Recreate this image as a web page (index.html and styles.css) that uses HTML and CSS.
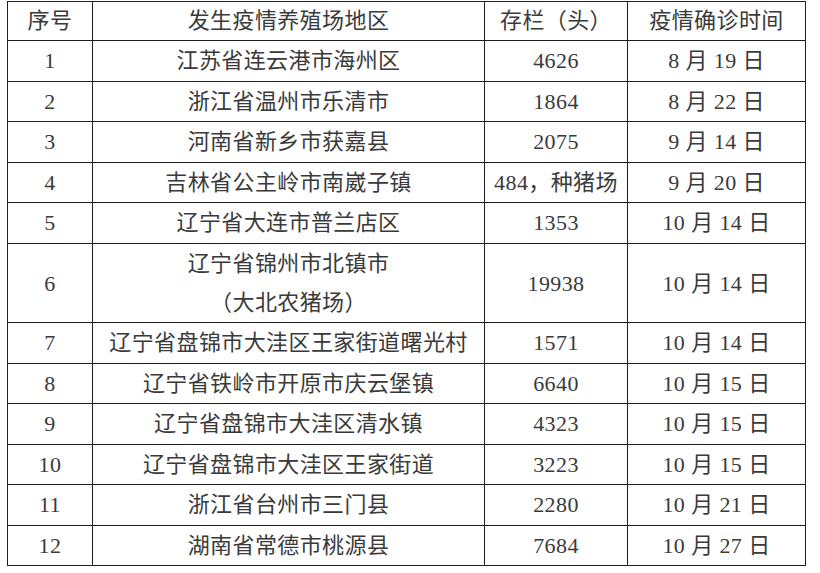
FILE: index.html
```html
<!DOCTYPE html>
<html lang="zh-CN">
<head>
<meta charset="utf-8">
<title>发生疫情养殖场地区</title>
<link rel="stylesheet" href="styles.css">
</head>
<body>
<table class="grid">
  <colgroup>
    <col class="c-no">
    <col class="c-area">
    <col class="c-stock">
    <col class="c-date">
  </colgroup>
  <tr class="head"><td>序号</td><td>发生疫情养殖场地区</td><td>存栏（头）</td><td>疫情确诊时间</td></tr>
  <tr><td>1</td><td>江苏省连云港市海州区</td><td>4626</td><td>8 月 19 日</td></tr>
  <tr><td>2</td><td>浙江省温州市乐清市</td><td>1864</td><td>8 月 22 日</td></tr>
  <tr><td>3</td><td>河南省新乡市获嘉县</td><td>2075</td><td>9 月 14 日</td></tr>
  <tr><td>4</td><td>吉林省公主岭市南崴子镇</td><td>484，种猪场</td><td>9 月 20 日</td></tr>
  <tr><td>5</td><td>辽宁省大连市普兰店区</td><td>1353</td><td>10 月 14 日</td></tr>
  <tr class="tall"><td>6</td><td>辽宁省锦州市北镇市<br>（大北农猪场）</td><td>19938</td><td>10 月 14 日</td></tr>
  <tr><td>7</td><td>辽宁省盘锦市大洼区王家街道曙光村</td><td>1571</td><td>10 月 14 日</td></tr>
  <tr><td>8</td><td>辽宁省铁岭市开原市庆云堡镇</td><td>6640</td><td>10 月 15 日</td></tr>
  <tr><td>9</td><td>辽宁省盘锦市大洼区清水镇</td><td>4323</td><td>10 月 15 日</td></tr>
  <tr><td>10</td><td>辽宁省盘锦市大洼区王家街道</td><td>3223</td><td>10 月 15 日</td></tr>
  <tr><td>11</td><td>浙江省台州市三门县</td><td>2280</td><td>10 月 21 日</td></tr>
  <tr><td>12</td><td>湖南省常德市桃源县</td><td>7684</td><td>10 月 27 日</td></tr>
</table>
</body>
</html>
```
FILE: styles.css
```css
html, body {
  margin: 0;
  background: #ffffff;
}
body {
  padding: 1px 0 0 7px;
  font-family: "Liberation Serif", "Noto Sans CJK SC", serif;
  font-size: 22px;
  color: #3a3a3a;
}
.grid {
  border-collapse: collapse;
  table-layout: fixed;
  width: 798px;
}
.c-no { width: 85px; }
.c-area { width: 392px; }
.c-stock { width: 143px; }
.c-date { width: 178px; }
.grid td {
  border: 1px solid #1e1e1e;
  padding: 0;
  text-align: center;
  vertical-align: middle;
  line-height: 36px;
  height: 40px;
  box-sizing: border-box;
  white-space: nowrap;
  letter-spacing: 0.4px;
}
.grid tr:nth-child(even) td {
  height: 41px;
}
.grid .head td {
  height: 39px;
}
.grid .tall td {
  height: 79px;
  line-height: 39px;
}
```
